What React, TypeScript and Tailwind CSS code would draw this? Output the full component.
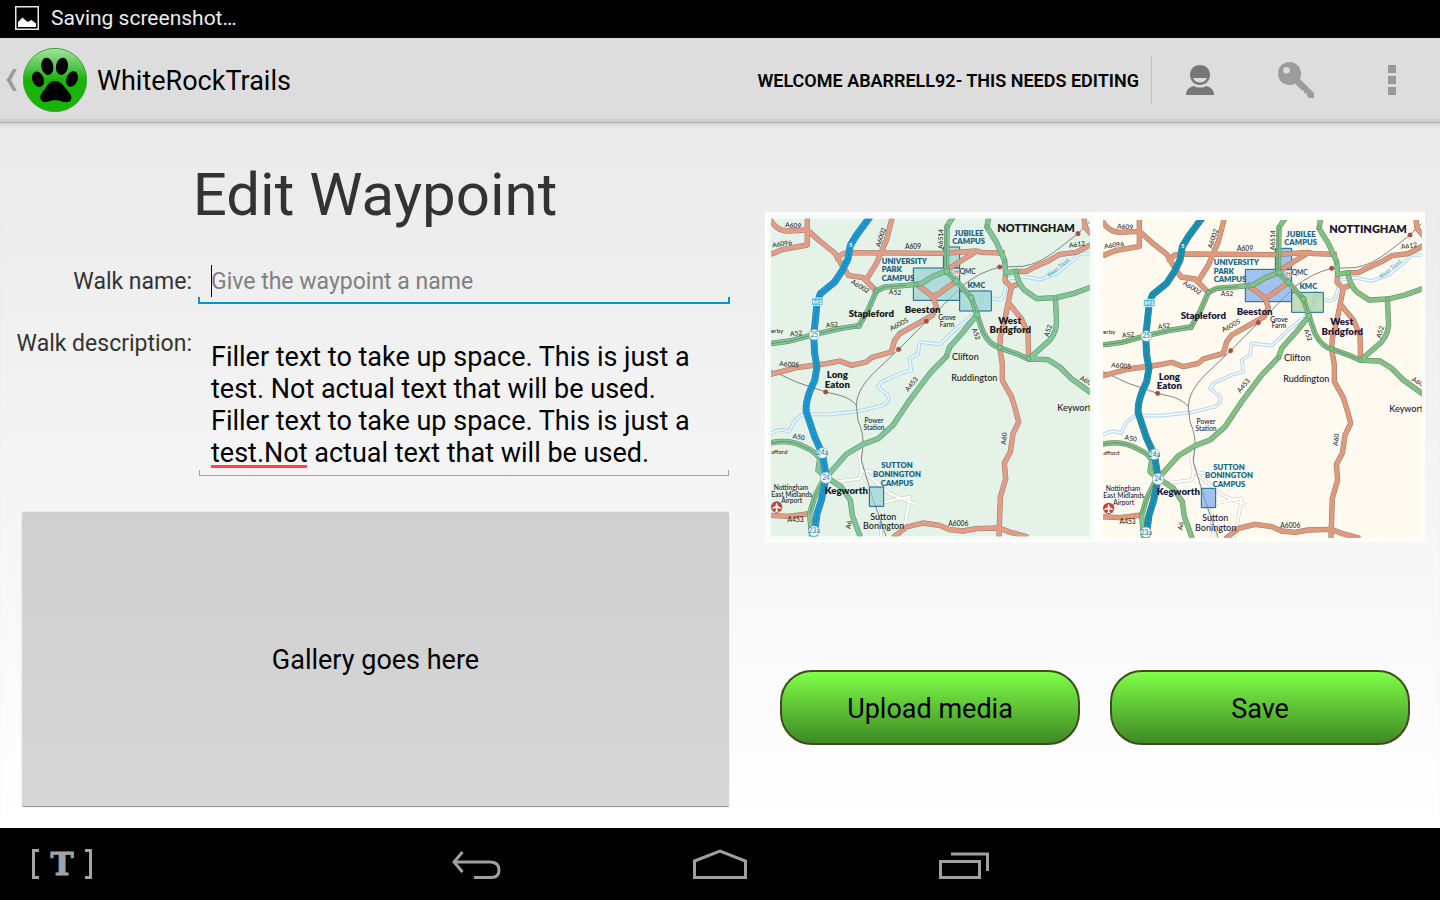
import React from "react";

type Palette = {
  land: string;
  frame: string;
  motorway: string;
  green: string;
  orange: string;
  river: string;
  campus: string;
  kmc: string;
  ink: string;
  label: string;
};

const MINT: Palette = {
  land: "#e4f2e7",
  frame: "#f6fbf7",
  motorway: "#199ad6",
  green: "#80c798",
  orange: "#e39c86",
  river: "#a9d6f2",
  campus: "#8fd0d3",
  kmc: "#8fd0d3",
  ink: "#1a1a1a",
  label: "#1b5f86",
};

const CREAM: Palette = {
  land: "#fffaf0",
  frame: "#fffdf7",
  motorway: "#1792b5",
  green: "#82c285",
  orange: "#e0997a",
  river: "#b4d4ee",
  campus: "#6fa3ee",
  kmc: "#9fce9f",
  ink: "#1c1638",
  label: "#12688a",
};

const ORANGE_ROADS = [
  "M24 152L60 137L133 124L133 40",
  "M20 45Q40 82 75 82L133 79L170 112L215 148L240 190L258 216L300 222L340 262",
  "M224 172Q226 148 260 147L540 149L640 142L655 146L725 148",
  "M388 40L370 110L340 180L312 225",
  "M20 513L100 492L190 480L230 472L265 485L310 475L325 462L385 445L395 410L410 390L460 362L508 335L520 308L510 280L492 265L462 243",
  "M508 278L525 272L580 232",
  "M560 193L640 143",
  "M728 208L726 232L745 250L735 300L725 350L712 400L710 432L718 480L718 530L745 578L758 620L767 655L750 690L742 745L724 778L728 825L712 880L708 1000",
  "M735 296L775 345L795 390L797 466",
  "M742 250L768 240",
  "M758 203L790 203L815 190L860 170L890 152L940 146L985 122",
  "M963 40L966 70L985 92",
  "M20 935L75 938L140 930",
  "M390 1002L430 970L480 958L530 965L560 978L600 982L640 975L708 973L740 985L795 1000",
];

const GREEN_ROADS = [
  "M20 420L80 412L155 392L230 375L288 366L315 320L340 262L365 250L430 245L475 240L510 218L550 203L580 232L625 282L642 333L660 385Q680 425 710 432L760 450L797 466L855 468L890 490L925 525L985 568",
  "M570 40L552 68L550 203",
  "M677 40L672 70L700 115L725 170L728 208L758 203Q765 240 785 260L822 285L880 282L930 270L985 250",
  "M877 283L880 340Q885 380 860 410L797 466",
  "M642 333L600 385L560 430L550 458L500 510L440 590L390 665L345 705L300 722L250 752L190 820L235 850L262 890L268 935L292 1000",
  "M20 718Q80 705 125 730Q160 745 170 765L165 800L188 820",
  "M180 830L155 880L140 930L146 1000",
];

const MOTORWAY =
  "M322 38L280 95L262 125L255 165L238 200L215 235L172 270L162 300L157 350L152 395L155 450L162 490L155 530Q125 590 130 625L155 700L178 750L190 820L175 890L162 930L153 1000";

const RIVER =
  "M20 692Q50 670 78 685L95 650L120 632L200 632L290 622L360 605Q385 590 372 572L345 550L355 535L410 510L445 500L440 465L465 450L470 415L530 422L580 375L630 335L655 300L660 262L690 285Q720 295 725 265L735 225L780 218L830 228L880 210L930 170L950 150L985 150";

const RAILWAYS = [
  "M24 500L100 535L188 565L230 575Q265 585 280 605",
  "M980 55L945 90L880 140Q830 180 780 188L710 190Q650 205 600 245L520 325L490 353L407 437L330 510Q280 560 280 605L285 650Q302 690 300 722L295 770L325 870L370 1000",
];

const VILLAGE_ROADS = [
  "M298 725L288 755L296 800L340 835L380 870L455 900",
  "M210 835L290 825L296 800L330 805",
  "M320 850L345 900L410 885L440 880L420 998",
  "M330 870L350 940L355 998",
];

const JUNCTION_DOTS: [number, number, number][] = [
  [552, 203, 9], [580, 232, 9], [625, 282, 9], [642, 333, 9], [288, 368, 7], [340, 262, 6],
  [710, 432, 7], [797, 466, 7], [877, 283, 6], [760, 203, 7], [725, 172, 6], [672, 68, 6], [552, 68, 6], [460, 243, 6], [552, 458, 6],
];

const STATIONS: [number, number][] = [
  [945, 90], [710, 190], [490, 353], [407, 437], [188, 565],
];

const JUNCTIONS: [number, number, string, number][] = [
  [154, 393, "25", 16],
  [178, 748, "24a", 16],
  [189, 822, "24", 17],
  [153, 982, "23a", 16],
];

type RoadLabel = [number, number, number, string];
const ROAD_LABELS: RoadLabel[] = [
  [90, 72, 4, "A609"], [58, 127, -8, "A6096"], [360, 103, -72, "A6002"], [450, 137, 0, "A609"],
  [540, 106, -88, "A6514"], [943, 129, -8, "A612"], [288, 254, 32, "A6002"], [396, 273, 3, "A52"],
  [208, 370, -8, "A52"], [100, 396, -6, "A52"], [411, 368, -28, "A6005"], [78, 489, 5, "A6005"],
  [633, 393, 70, "A52"], [862, 383, -72, "A52"], [451, 546, -52, "A453"], [106, 707, 10, "A50"],
  [730, 705, -85, "A60"], [98, 956, 0, "A453"], [586, 968, 0, "A6006"], [965, 536, 28, "A60"],
  [264, 964, -80, "A6"],
];

type Place = [number, number, string, number, boolean];
const PLACES: Place[] = [
  [819, 84, "NOTTINGHAM", 33, true],
  [325, 341, "Stapleford", 29, true],
  [479, 329, "Beeston", 29, true],
  [740, 360, "West", 29, true], [742, 389, "Bridgford", 29, true],
  [223, 524, "Long", 29, true], [223, 552, "Eaton", 29, true],
  [250, 871, "Kegworth", 29, true],
  [607, 468, "Clifton", 27, false],
  [634, 532, "Ruddington", 27, false],
  [361, 948, "Sutton", 27, false], [362, 977, "Bonington", 27, false],
  [614, 211, "QMC", 20, false],
  [552, 350, "Grove", 20, false], [552, 370, "Farm", 20, false],
  [333, 658, "Power", 20, false], [333, 679, "Station", 20, false],
  [84, 859, "Nottingham", 20, false], [86, 880, "East Midlands", 20, false], [86, 899, "Airport", 20, false],
];

type CampusLabel = [number, number, string, "start" | "middle"];
const CAMPUS_LABELS: CampusLabel[] = [
  [618, 97, "JUBILEE", "middle"], [617, 121, "CAMPUS", "middle"],
  [356, 181, "UNIVERSITY", "start"], [356, 206, "PARK", "start"], [356, 232, "CAMPUS", "start"],
  [640, 252, "KMC", "middle"],
  [402, 794, "SUTTON", "middle"], [402, 819, "BONINGTON", "middle"], [402, 846, "CAMPUS", "middle"],
];

function TrailMap({ id, palette: p, viewBox, title }: { id: string; palette: Palette; viewBox: string; title: string }) {
  return (
    <svg viewBox={viewBox} role="img" aria-label={title} className="block aspect-square min-w-0 flex-1 font-['Lato',sans-serif]">
      <defs>
        <clipPath id={id}>
          <rect x="24" y="45" width="956" height="953" />
        </clipPath>
      </defs>
      <rect x="13" y="33" width="979" height="977" rx="12" fill={p.frame} />
      <g clipPath={`url(#${id})`} fill="none" strokeLinejoin="round">
        <rect x="24" y="45" width="956" height="953" fill={p.land} />
        <path d={RIVER} stroke={p.river} strokeWidth="11" />
        <path d={RIVER} stroke="#f3faff" strokeWidth="5" />
        {VILLAGE_ROADS.map((d) => <path key={d} d={d} stroke="#c0c6c0" strokeWidth="10" />)}
        {VILLAGE_ROADS.map((d) => <path key={d} d={d} stroke="#ffffff" strokeWidth="7" />)}
        {RAILWAYS.map((d) => <path key={d} d={d} stroke="#6b6b6b" strokeWidth="2.5" />)}
        <g fill={p.campus} fillOpacity="0.65" stroke={p.label} strokeWidth="3">
          <rect x="541" y="130" width="49" height="63" />
          <rect x="451" y="193" width="139" height="97" />
          <rect x="319" y="850" width="43" height="58" />
        </g>
        <rect x="590" y="262" width="95" height="60" fill={p.kmc} fillOpacity="0.65" stroke={p.label} strokeWidth="3" />
        {ORANGE_ROADS.map((d) => <path key={d} d={d} stroke="#8f7f74" strokeWidth="16" />)}
        {ORANGE_ROADS.map((d) => <path key={d} d={d} stroke={p.orange} strokeWidth="13" />)}
        {GREEN_ROADS.map((d) => <path key={d} d={d} stroke="#66806b" strokeWidth="16" />)}
        {GREEN_ROADS.map((d) => <path key={d} d={d} stroke={p.green} strokeWidth="13" />)}
        <path d="M20 420L80 412L155 392L230 375L288 366L315 320L340 262L365 250L430 245M550 68L550 203L580 232L625 282L642 333L660 385Q680 425 710 432L760 450L797 466M24 718Q80 705 125 730Q160 745 170 765M180 830L155 880L140 930" stroke="#4e7d5c" strokeWidth="2" />
        <path d={MOTORWAY} stroke="#4a7f92" strokeWidth="21" />
        <path d={MOTORWAY} stroke={p.motorway} strokeWidth="18" />
        <path d={MOTORWAY} stroke="#256a86" strokeWidth="2" strokeDasharray="7 5" />
        {JUNCTION_DOTS.map(([x, y, r]) => (
          <circle key={`${x}-${y}`} cx={x} cy={y} r={r} fill={p.green} stroke="#4e9a64" strokeWidth="2" />
        ))}
        {STATIONS.map(([x, y]) => (
          <circle key={`${x}-${y}`} cx={x} cy={y} r="7" fill="#b9453c" stroke="#8a5f5a" strokeWidth="1" />
        ))}
        {JUNCTIONS.map(([x, y, name, r]) => (
          <g key={name}>
            <circle cx={x} cy={y} r={r} fill="#ffffff" stroke="#6aa5bd" strokeWidth="2" />
            <text x={x} y={y + 7} textAnchor="middle" fontSize="20" fontWeight="700" fill={p.motorway}>{name}</text>
          </g>
        ))}
        <rect x="146" y="283" width="34" height="22" fill="#4fb5e0" stroke="#d8f1fb" strokeWidth="3" />
        <text x="163" y="301" textAnchor="middle" fontSize="19" fontWeight="700" fill="#ffffff">M1</text>
        <rect x="255" y="114" width="15" height="18" fill={p.motorway} />
        <text x="263" y="130" textAnchor="middle" fontSize="17" fontWeight="700" fill="#ffffff">5</text>
        <rect x="572" y="196" width="17" height="19" fill="#f7e5e1" />
        <text x="580" y="212" textAnchor="middle" fontSize="17" fontWeight="700" fill="#c4564a">H</text>
        <circle cx="41" cy="910" r="17" fill="#c0453a" />
        <path d="M41 897Q44 900 44 906L54 912L54 916L44 913L43 920L47 924L35 924L39 920L38 913L28 916L28 912L38 906Q38 900 41 897Z" fill="#ffffff" />
        <g fill="#1f1f1f" fontSize="20" fontWeight="500" textAnchor="middle">
          {ROAD_LABELS.map(([x, y, angle, name]) => (
            <text key={`${x}-${y}`} x={x} y={y} transform={`rotate(${angle} ${x} ${y})`}>{name}</text>
          ))}
        </g>
        <g fill={p.ink}>
          {PLACES.map(([x, y, name, size, bold]) => (
            <text key={name} x={x} y={y} textAnchor="middle" fontSize={size} fontWeight={bold ? 800 : 500}>{name}</text>
          ))}
          <text x="883" y="621" fontSize="27" fontWeight="500">Keywort</text>
          <text x="24" y="388" fontSize="19">erby</text>
          <text x="24" y="750" fontSize="19">afford</text>
        </g>
        <g fill={p.label} fontSize="23" fontWeight="800">
          {CAMPUS_LABELS.map(([x, y, name, anchor]) => (
            <text key={`${name}-${y}`} x={x} y={y} textAnchor={anchor}>{name}</text>
          ))}
        </g>
        <text x="890" y="196" textAnchor="middle" fontSize="18" fontStyle="italic" fill="#3b9ed4" transform="rotate(-38 890 196)">River Trent</text>
      </g>
    </svg>
  );
}

function PawLogo() {
  return (
    <svg viewBox="0 0 192 192" className="size-16 shrink-0" aria-hidden="true">
      <defs>
        <linearGradient id="paw-disc" x1="0" y1="0" x2="0" y2="1">
          <stop offset="0" stopColor="#a5e3a0" />
          <stop offset="0.25" stopColor="#5fcb58" />
          <stop offset="0.5" stopColor="#19b408" />
          <stop offset="1" stopColor="#17b305" />
        </linearGradient>
      </defs>
      <circle cx="96" cy="96" r="95" fill="url(#paw-disc)" stroke="#3fa53a" strokeWidth="3" />
      <ellipse cx="73" cy="55" rx="18" ry="26" transform="rotate(-10 73 55)" />
      <ellipse cx="117" cy="55" rx="18" ry="26" transform="rotate(10 117 55)" />
      <ellipse cx="45" cy="94" rx="17" ry="24" transform="rotate(-22 45 94)" />
      <ellipse cx="147" cy="93" rx="17" ry="24" transform="rotate(22 147 93)" />
      <path d="M96 99C108 99 116 105 123 115C133 130 145 136 145 149C145 160 134 164 124 162C114 160 107 156 97 156C87 156 80 160 70 162C60 164 52 159 52 148C52 136 62 130 70 116C77 105 84 99 96 99Z" />
    </svg>
  );
}

function FieldBar({ focused = false }: { focused?: boolean }) {
  return focused ? (
    <div className="h-[7px] border-x-2 border-b-2 border-[#0099cc]" />
  ) : (
    <div className="mx-px h-[6px] border-x border-b border-[#a3a3a3]" />
  );
}

function PillButton({ children }: { children: React.ReactNode }) {
  return (
    <button
      type="button"
      className="h-[75px] min-w-0 flex-1 rounded-[32px] border-2 border-[#42491f] bg-linear-to-b from-[#7fff48] to-[#3e8a23] pt-[3px] text-[27px] text-black"
    >
      {children}
    </button>
  );
}

export default function App() {
  return (
    <div className="flex min-h-screen flex-col bg-black font-['Roboto',sans-serif] text-black">
      <div className="flex h-[38px] shrink-0 items-center gap-3 bg-black px-[15px] pb-[2px] text-white">
        <svg viewBox="0 0 24 24" className="size-6" aria-hidden="true">
          <rect x="0.75" y="0.75" width="22.5" height="22.5" fill="none" stroke="#e8e8e8" strokeWidth="1.5" />
          <path d="M3 21V16L7.500 11.500L12.500 16L16.500 14L21 17.500V21Z" fill="#ffffff" />
        </svg>
        <span className="text-[21px] leading-8 text-[#ececec]">Saving screenshot…</span>
      </div>

      <header className="flex h-[85px] shrink-0 items-stretch border-b border-[#aaaaaa] bg-[#dddddd] shadow-[inset_0_-3px_0_#d0d0d0]">
        <a href="#up" className="flex items-center gap-[10px] pl-[6px]">
          <span className="flex items-center gap-[6px]">
            <svg viewBox="0 0 11 22" className="h-[22px] w-[11px]" aria-hidden="true">
              <path d="M11 0H7L0.5 11L7 22H11L5 11Z" fill="#9b9b9b" />
            </svg>
            <PawLogo />
          </span>
          <span className="pt-[2px] text-[27px]">WhiteRockTrails</span>
        </a>
        <div className="ml-auto flex items-center">
          <button type="button" className="h-12 border-r border-[#c2c2c2] px-3 text-[18px] font-semibold uppercase">
            Welcome abarrell92- this needs editing
          </button>
          <button type="button" aria-label="Account" className="flex h-12 w-24 items-center justify-center">
            <svg viewBox="0 0 28 30" className="h-[30px] w-7" fill="#777777" aria-hidden="true">
              <path fillRule="evenodd" d="M14 0C20 0 24 4 24 10C24 16 19.500 20 14 20C8.500 20 4 16 4 10C4 4 8 0 14 0ZM7 13C8.500 16 11 17.500 14 17.500C17 17.500 19.500 16 21 13Z" />
              <path d="M0 30C0 25 3 22 8 21C11 23 17 23 20 21C25 22 28 25 28 30Z" />
            </svg>
          </button>
          <button type="button" aria-label="Log in" className="flex h-12 w-24 items-center justify-center">
            <svg viewBox="0 0 36 36" className="size-9" fill="#9c9c9c" aria-hidden="true">
              <path fillRule="evenodd" d="M11.500 0C18 0 23 5 23 11.500C23 13.500 22.500 15.500 21.800 17L36 31V36H30.500L29 33.500V31.500H27L26 30.500V28.500H24L17 21.500C15.500 22.500 13.500 23 11.500 23C5 23 0 18 0 11.500C0 5 5 0 11.500 0ZM8.500 5A3.300 3.300 0 1 0 8.500 11.600A3.300 3.300 0 1 0 8.500 5Z" />
            </svg>
          </button>
          <button type="button" aria-label="More options" className="flex h-12 w-24 flex-col items-center justify-center gap-[3px]">
            <span className="size-2 bg-[#999999]" />
            <span className="size-2 bg-[#999999]" />
            <span className="size-2 bg-[#999999]" />
          </button>
        </div>
      </header>

      <main className="grid flex-1 grid-cols-[75fr_69fr] bg-linear-to-b from-[#eaeaea] to-white shadow-[inset_0_5px_4px_-3px_#cfcfcf]">
        <form className="flex flex-col px-[21px] pt-[36px] pb-[21px]">
          <h1 className="text-center text-[60px] leading-[72px] text-[#333333]">Edit Waypoint</h1>

          <div className="-mr-px -ml-[7px] mt-[34px] grid grid-cols-[178px_1fr] gap-x-[6px] gap-y-[23px]">
            <label htmlFor="walk-name" className="text-right text-[23px] leading-[34px] whitespace-nowrap text-[#333333]">
              Walk name:
            </label>
            <div className="relative">
              <input
                id="walk-name"
                type="text"
                placeholder="Give the waypoint a name"
                className="block h-8 w-full bg-transparent px-[13px] pt-[2px] text-[23px] outline-none placeholder:text-[#808080]"
              />
              <span className="absolute top-0 left-[13px] h-8 w-px bg-black" aria-hidden="true" />
              <FieldBar focused />
            </div>

            <label htmlFor="walk-description" className="text-right text-[23px] leading-[34px] whitespace-nowrap text-[#333333]">
              Walk description:
            </label>
            <div className="relative pt-[14px]">
              <textarea
                id="walk-description"
                rows={4}
                spellCheck={false}
                defaultValue={"Filler text to take up space. This is just a test. Not actual text that will be used.\nFiller text to take up space. This is just a test.Not actual text that will be used."}
                className="block w-full resize-none overflow-hidden bg-transparent px-[13px] pb-px text-[27px] leading-8 outline-none"
              />
              <span className="absolute bottom-2 left-[13px] h-[3px] w-24 bg-[#ff4444]" aria-hidden="true" />
              <FieldBar />
            </div>
          </div>

          <button
            type="button"
            className="ml-px mt-[36px] min-h-[294px] flex-1 rounded-[2px] border-b border-[#8e8e8e] bg-linear-to-b from-[#cfcfcf] to-[#d7d7d7] pt-[3px] text-[27px] shadow-[0_0_1px_#999999]"
          >
            Gallery goes here
          </button>
        </form>

        <section className="flex flex-col px-[15px] pt-[89px]">
          <div className="flex bg-white">
            <TrailMap id="mint-map" palette={MINT} viewBox="6 25 990 990" title="Campus map" />
            <TrailMap id="cream-map" palette={CREAM} viewBox="0 21 990 990" title="Campus map, highlighted" />
          </div>
          <div className="mt-32 flex gap-[30px] px-[15px]">
            <PillButton>Upload media</PillButton>
            <PillButton>Save</PillButton>
          </div>
        </section>
      </main>

      <nav className="grid h-[72px] shrink-0 grid-cols-[1fr_auto_1fr] items-center bg-black px-8" aria-label="System">
        <button type="button" aria-label="Text input" className="justify-self-start">
          <svg viewBox="0 -9 60 48" className="h-12 w-[60px]" aria-hidden="true">
            <path d="M7 1.500H1.500V28.500H7M53 1.500H58.500V28.500H53" fill="none" stroke="#a3a3a3" strokeWidth="3" />
            <text x="30" y="26" textAnchor="middle" fontSize="31" className="font-['DejaVu_Serif',serif] font-bold" fill="#a3a3a3" stroke="#a3a3a3" strokeWidth="1">T</text>
          </svg>
        </button>
        <div className="flex items-center gap-48">
          <button type="button" aria-label="Back">
            <svg viewBox="0 0 49 30" className="h-[30px] w-[49px]" fill="none" stroke="#a0a0a0" strokeWidth="3" aria-hidden="true">
              <path d="M10.500 4L2 14L10.500 24M2 14H38C44.500 14 47 17.500 47 22C47 27 44 29.500 39 29.500H22" transform="translate(0 -1)" />
            </svg>
          </button>
          <button type="button" aria-label="Home">
            <svg viewBox="0 0 54 30" className="h-[30px] w-[54px]" fill="none" stroke="#a0a0a0" strokeWidth="3" aria-hidden="true">
              <path d="M1.500 12L27 2L52.500 12V28.500H1.500Z" />
            </svg>
          </button>
          <button type="button" aria-label="Recent apps">
            <svg viewBox="0 0 50 30" className="h-[30px] w-[50px]" fill="none" stroke="#a0a0a0" strokeWidth="3" aria-hidden="true">
              <path d="M1.500 12.500H40.500V28.500H1.500ZM12 5H48.500V22" />
            </svg>
          </button>
        </div>
      </nav>
    </div>
  );
}
